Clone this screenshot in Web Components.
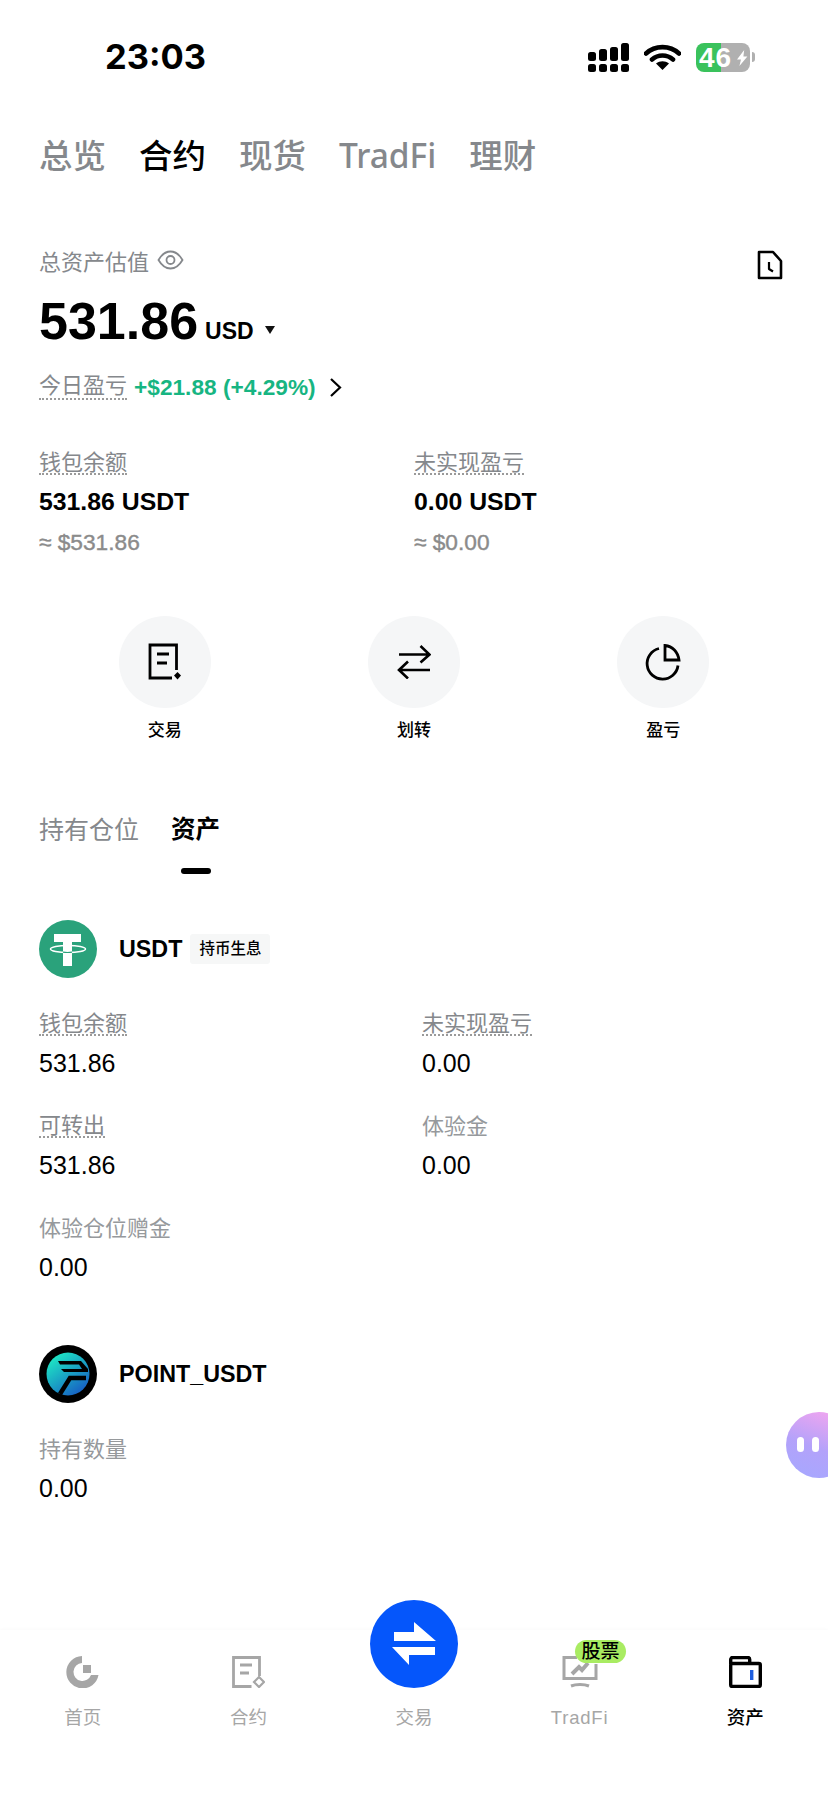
<!doctype html>
<html lang="zh">
<head>
<meta charset="utf-8">
<title>资产</title>
<style>
  html, body { margin: 0; padding: 0; background: #fff; }
  body {
    font-family: "Liberation Sans", "Noto Sans CJK SC", sans-serif;
    color: #000;
    width: 828px;
    height: 1795px;
    overflow: hidden;
  }
</style>
</head>
<body>
<app-screen>
  <status-bar time="23:03"></status-bar>
  <top-tabs items="总览,合约,现货,TradFi,理财" active="1"></top-tabs>
  <asset-summary></asset-summary>
  <action-row></action-row>
  <sub-tabs></sub-tabs>

  <coin-card name="USDT" badge="持币生息" style="margin-top:46px">
    <svg slot="logo" viewBox="0 0 58 58" width="58" height="58">
      <circle cx="29" cy="29" r="29" fill="#2aa27b"/>
      <path d="M15 14h27v8H33v24h-9V22h-9z" fill="#fff"/>
      <ellipse cx="29" cy="29" rx="17.5" ry="3.6" fill="none" stroke="#fff" stroke-width="1.5"/>
      <path d="M24 32.200q4.500 .6 9 0" fill="none" stroke="#2aa27b" stroke-width="1.200"/>
    </svg>
    <metric-item label="钱包余额" value="531.86" dotted></metric-item>
    <metric-item label="未实现盈亏" value="0.00" dotted></metric-item>
    <metric-item label="可转出" value="531.86" dotted></metric-item>
    <metric-item label="体验金" value="0.00"></metric-item>
    <metric-item label="体验仓位赠金" value="0.00"></metric-item>
  </coin-card>

  <coin-card name="POINT_USDT" style="margin-top:58px">
    <svg slot="logo" viewBox="0 0 58 58" width="58" height="58">
      <defs>
        <linearGradient id="pg" x1="0.2" y1="0.1" x2="0.8" y2="0.9">
          <stop offset="0" stop-color="#1de3c4"/>
          <stop offset="1" stop-color="#1763c4"/>
        </linearGradient>
      </defs>
      <circle cx="29" cy="29" r="29" fill="#000"/>
      <circle cx="29" cy="29" r="21.5" fill="url(#pg)"/>
      <path d="M19 16h23l7 8v3H25l-3-3h21l-3-4.500H21z" fill="#000"/>
      <path d="M47 33H31L21 49" fill="none" stroke="#000" stroke-width="4.500"/>
    </svg>
    <metric-item label="持有数量" value="0.00"></metric-item>
  </coin-card>

  <tab-bar></tab-bar>
  <float-bot></float-bot>
</app-screen>

<script>
const FONT = '"Liberation Sans", "Noto Sans CJK SC", sans-serif';
const GREY = '#85888c';

class AppScreen extends HTMLElement {
    constructor() {
        super();
        this.attachShadow({mode: 'open'}).innerHTML = `
            <style>
            :host {
                display: flex;
                flex-direction: column;
                position: relative;
                width: 828px;
                height: 1795px;
                overflow: hidden;
                background: #fff;
            }
            </style>
            <slot></slot>
        `;
    }
}

class StatusBar extends HTMLElement {
    constructor() {
        super();
        const time = this.getAttribute('time');
        this.attachShadow({mode: 'open'}).innerHTML = `
            <style>
            :host {
                display: flex;
                align-items: center;
                height: 114px;
                box-sizing: border-box;
                padding: 0 73px 0 105px;
            }
            .time {
                font: 700 34.500px/34px Inter, ${FONT};
                flex: 1;
            }
            .icons { display: flex; align-items: center; gap: 14px; }
            .batt {
                position: relative;
                width: 54px;
                height: 29px;
                border-radius: 8px;
                overflow: hidden;
                background: linear-gradient(90deg, #3ac25c 0 25px, #b0b0b0 25px);
                color: #fff;
                font: 700 28px/29px ${FONT};
                letter-spacing: 1px;
                padding-left: 3px;
                box-sizing: border-box;
                margin-left: 1px;
            }
            .batt svg { position: absolute; right: 1px; top: 5px; }
            .nub { width: 3px; height: 10px; background: #b0b0b0; border-radius: 0 3px 3px 0; margin-left: -12px; }
            </style>
            <div class="time">${time}</div>
            <div class="icons">
                <svg width="42" height="29" viewBox="0 0 42 29">
                    <g fill="#000">
                        <rect x="0" y="21" width="8" height="8" rx="2.500"/><rect x="11" y="21" width="8" height="8" rx="2.500"/>
                        <rect x="22" y="21" width="8" height="8" rx="2.500"/><rect x="33" y="21" width="8" height="8" rx="2.500"/>
                        <rect x="0" y="9" width="8" height="9" rx="2.500"/><rect x="11" y="6" width="8" height="12" rx="2.500"/>
                        <rect x="22" y="4" width="8" height="14" rx="2.500"/><rect x="33" y="0" width="8" height="18" rx="2.500"/>
                    </g>
                </svg>
                <svg width="37" height="26" viewBox="0 0 37 26">
                    <path d="M2 9.500C11 1 26 1 35 9.500M8 15.500C14 10.200 23 10.200 29 15.500" fill="none" stroke="#000" stroke-width="4.600" stroke-linecap="round"/>
                    <path d="M12 19.500c4-3 9-3 13 0L18.500 26z" fill="#000"/>
                </svg>
                <div class="batt">46
                    <svg width="12" height="20" viewBox="0 0 15 20"><path d="M9 0L0 12h5l-2 8 10-12H8z" fill="#fff"/></svg>
                </div>
                <div class="nub"></div>
            </div>
        `;
    }
}

class TopTabs extends HTMLElement {
    constructor() {
        super();
        const active = +this.getAttribute('active');
        const items = this.getAttribute('items').split(',')
            .map((t, i) => `<span class="${i === active ? 'on' : ''}">${t}</span>`).join('');
        this.attachShadow({mode: 'open'}).innerHTML = `
            <style>
            :host {
                display: flex;
                gap: 33px;
                padding: 21px 0 0 39px;
                height: 40px;
                font: 500 33.500px/40px "Noto Sans", ${FONT};
                color: ${GREY};
            }
            .on { color: #000; }
            </style>
            ${items}
        `;
    }
}

class DottedLabel extends HTMLElement {
    constructor() {
        super();
        this.attachShadow({mode: 'open'}).innerHTML = `
            <style>
            :host {
                display: inline-block;
                height: 24px;
                line-height: 27px;
                font-size: 22px;
                color: ${GREY};
                border-bottom: 2px dotted #9a9a9a;
            }
            </style>
            <slot></slot>
        `;
    }
}

class StatBlock extends HTMLElement {
    constructor() {
        super();
        this.attachShadow({mode: 'open'}).innerHTML = `
            <style>
            :host { display: block; }
            .l, .v, .a { height: 40px; display: flex; align-items: center; }
            .v { font: 700 24.800px/40px ${FONT}; color: #000; }
            .a { font: 400 22.700px/40px ${FONT}; color: #8b8b8b; -webkit-text-stroke: 0.4px #8b8b8b; }
            </style>
            <div class="l"><dotted-label>${this.getAttribute('label')}</dotted-label></div>
            <div class="v">${this.getAttribute('value')}</div>
            <div class="a">${this.getAttribute('approx')}</div>
        `;
    }
}

class AssetSummary extends HTMLElement {
    constructor() {
        super();
        this.attachShadow({mode: 'open'}).innerHTML = `
            <style>
            :host { display: block; padding: 70px 45px 0 39px; }
            .head {
                display: flex;
                align-items: center;
                height: 30px;
                font-size: 22px;
                color: ${GREY};
            }
            .head .eye { margin-left: 8px; margin-top: 0; }
            .head .doc { margin-left: auto; margin-top: 10px; }
            .big {
                display: flex;
                align-items: baseline;
                height: 60px;
                line-height: 60px;
                margin-top: 16px;
                font-weight: 700;
            }
            .big b { font-size: 52px; }
            .big i { font-style: normal; font-size: 23px; margin-left: 7px; }
            .big svg { margin-left: 11px; align-self: center; margin-top: 18px; }
            .pnl {
                display: flex;
                align-items: center;
                height: 30px;
                margin-top: 21px;
            }
            .pnl dotted-label { line-height: 24px; }
            .pnl .g {
                font: 700 22.700px/30px ${FONT};
                color: #17b582;
                margin-left: 7px;
            }
            .pnl svg { margin-left: 13px; }
            .stats {
                display: grid;
                grid-template-columns: 375px 1fr;
                margin-top: 40px;
            }
            </style>
            <div class="head">
                <span>总资产估值</span>
                <svg class="eye" width="27" height="20" viewBox="0 0 27 20" fill="none" stroke="#85888c" stroke-width="1.800">
                    <path d="M1.500 10C5 4 9 1.500 13.500 1.500S22 4 25.500 10C22 16 18 18.500 13.500 18.500S5 16 1.500 10z"/>
                    <circle cx="13.500" cy="10" r="4"/>
                </svg>
                <svg class="doc" width="26" height="30" viewBox="0 0 26 30" fill="none" stroke="#000" stroke-width="2.600" stroke-linejoin="round">
                    <path d="M2 2h14l8 9v17H2z"/>
                    <path d="M12 12v7l4 2.500" stroke-width="2.200"/>
                </svg>
            </div>
            <div class="big">
                <b>531.86</b><i>USD</i>
                <svg width="10" height="8" viewBox="0 0 10 8"><path d="M0 0h10L5 8z" fill="#111"/></svg>
            </div>
            <div class="pnl">
                <dotted-label>今日盈亏</dotted-label>
                <span class="g">+$21.88 (+4.29%)</span>
                <svg width="13" height="19" viewBox="0 0 13 19" fill="none" stroke="#000" stroke-width="2.200"><path d="M2 1l9 8.500-9 8.500"/></svg>
            </div>
            <div class="stats">
                <stat-block label="钱包余额" value="531.86 USDT" approx="≈ $531.86"></stat-block>
                <stat-block label="未实现盈亏" value="0.00 USDT" approx="≈ $0.00"></stat-block>
            </div>
        `;
    }
}

class ActionButton extends HTMLElement {
    constructor() {
        super();
        this.attachShadow({mode: 'open'}).innerHTML = `
            <style>
            :host {
                display: flex;
                flex-direction: column;
                align-items: center;
                gap: 11px;
            }
            .c {
                width: 92px;
                height: 92px;
                border-radius: 50%;
                background: #f5f6f7;
                display: flex;
                align-items: center;
                justify-content: center;
            }
            .t { font-size: 17px; line-height: 24px; font-weight: 500; color: #000; }
            </style>
            <div class="c"><slot></slot></div>
            <div class="t">${this.getAttribute('label')}</div>
        `;
    }
}

class ActionRow extends HTMLElement {
    constructor() {
        super();
        this.attachShadow({mode: 'open'}).innerHTML = `
            <style>
            :host {
                display: grid;
                grid-template-columns: repeat(3, 1fr);
                padding: 0 40px;
                margin-top: 54px;
            }
            </style>
            <action-button label="交易">
                <svg width="34" height="38" viewBox="0 0 34 38" fill="none" stroke="#000" stroke-width="2.800">
                    <path d="M28.500 27V2H2v33h22"/>
                    <path d="M9 11h12M9 20h10"/>
                    <path d="M29.500 29l3.500 3.500-3.500 4-3.500-4z" fill="#000" stroke="none"/>
                </svg>
            </action-button>
            <action-button label="划转">
                <svg width="34" height="34" viewBox="0 0 34 34" fill="none" stroke="#000" stroke-width="2.600">
                    <path d="M2 9.500h30M23.500 1l9 8.500-9 8"/>
                    <path d="M33 25H2M11 16.500l-9 8.500 9 8.500" />
                </svg>
            </action-button>
            <action-button label="盈亏">
                <svg width="36" height="37" viewBox="0 0 36 37" fill="none" stroke="#000" stroke-width="2.800">
                    <path d="M14 4.500A15.500 15.500 0 1 0 33 21.500"/>
                    <path d="M20 1.500c7.500 .5 13 6.500 14 14.500H20z"/>
                </svg>
            </action-button>
        `;
    }
}

class SubTabs extends HTMLElement {
    constructor() {
        super();
        this.attachShadow({mode: 'open'}).innerHTML = `
            <style>
            :host {
                display: flex;
                gap: 32px;
                padding-left: 39px;
                margin-top: 69px;
                font-size: 25px;
                line-height: 36px;
                color: ${GREY};
            }
            .t { display: flex; flex-direction: column; }
            .on { color: #000; font-weight: 700; align-items: center; font-size: 24.500px; }
            .bar { width: 30px; height: 6px; border-radius: 3px; background: #000; margin-top: 20px; }
            </style>
            <div class="t">持有仓位</div>
            <div class="t on">资产<div class="bar"></div></div>
        `;
    }
}

class CoinCard extends HTMLElement {
    constructor() {
        super();
        const badge = this.getAttribute('badge');
        this.attachShadow({mode: 'open'}).innerHTML = `
            <style>
            :host { display: block; padding: 0 39px; }
            .head { display: flex; align-items: center; height: 58px; }
            .head b { font-size: 23.300px; margin-left: 22px; }
            .badge {
                margin-left: 8px;
                height: 30px;
                line-height: 30px;
                padding: 0 9px;
                font-size: 15.500px;
                font-weight: 500;
                background: #f6f7f7;
                border-radius: 3px;
            }
            .grid {
                display: grid;
                grid-template-columns: 383px 1fr;
                row-gap: 22px;
                margin-top: 25px;
            }
            ::slotted(svg) { display: block; }
            </style>
            <div class="head">
                <slot name="logo"></slot>
                <b>${this.getAttribute('name')}</b>
                ${badge ? `<span class="badge">${badge}</span>` : ''}
            </div>
            <div class="grid"><slot></slot></div>
        `;
    }
}

class MetricItem extends HTMLElement {
    constructor() {
        super();
        const label = this.getAttribute('label');
        const dotted = this.hasAttribute('dotted');
        this.attachShadow({mode: 'open'}).innerHTML = `
            <style>
            :host { display: block; }
            .l, .v { height: 40px; display: flex; align-items: center; }
            .l { font-size: 22px; color: #96999c; }
            .l.plain { box-sizing: border-box; padding-bottom: 3px; }
            .v { font-size: 25px; color: #000; }
            </style>
            <div class="l ${dotted ? '' : 'plain'}">${dotted ? `<dotted-label>${label}</dotted-label>` : label}</div>
            <div class="v">${this.getAttribute('value')}</div>
        `;
    }
}

class TabItem extends HTMLElement {
    constructor() {
        super();
        this.attachShadow({mode: 'open'}).innerHTML = `
            <style>
            :host {
                display: flex;
                flex-direction: column;
                align-items: center;
                position: relative;
                color: #a6a6a6;
            }
            :host([active]) { color: #000; font-weight: 500; }
            :host([label="TradFi"]) .t { letter-spacing: .8px; }
            .i { height: 32px; margin-top: 26px; display: flex; align-items: flex-start; justify-content: center; }
            .t { font-size: 18.500px; line-height: 24px; margin-top: 18px; }
            </style>
            <div class="i"><slot></slot></div>
            <div class="t">${this.getAttribute('label')}</div>
        `;
    }
}

class TabBar extends HTMLElement {
    constructor() {
        super();
        this.attachShadow({mode: 'open'}).innerHTML = `
            <style>
            :host {
                display: grid;
                grid-template-columns: repeat(5, 1fr);
                position: absolute;
                left: 0;
                right: 0;
                bottom: 0;
                height: 165px;
                background: #fff;
                box-shadow: 0 -1px 3px rgba(0,0,0,0.025);
            }
            .fab {
                position: absolute;
                left: 370px;
                top: -30px;
                width: 88px;
                height: 88px;
                border-radius: 50%;
                background: #0556fb;
                display: flex;
                align-items: center;
                justify-content: center;
            }
            .pill {
                position: absolute;
                left: 575px;
                top: 10px;
                width: 51px;
                height: 23px;
                border-radius: 12px;
                background: #a9ec62;
                color: #000;
                font-size: 19px;
                line-height: 23px;
                text-align: center;
                font-weight: 500;
            }
            </style>
            <tab-item label="首页">
                <svg width="33" height="32" viewBox="0 0 33 32">
                    <path d="M16 0v7A9 9 0 1 0 25 19h7.500A16.200 16.200 0 1 1 16 0z" fill="#a6a6a6"/>
                    <rect x="17" y="9" width="8" height="8" fill="#a6a6a6"/>
                </svg>
            </tab-item>
            <tab-item label="合约">
                <svg width="33" height="32" viewBox="0 0 33 32" fill="none" stroke="#a6a6a6" stroke-width="2.800">
                    <path d="M27.500 20V1.500h-26v29h18"/>
                    <path d="M8 9h12M8 17h9"/>
                    <path d="M27 21l5 5-5 5-5-5z" stroke-width="2.200"/>
                </svg>
            </tab-item>
            <tab-item label="交易"></tab-item>
            <tab-item label="TradFi">
                <svg width="36" height="32" viewBox="0 0 36 32" fill="none" stroke="#a6a6a6" stroke-width="3">
                    <path d="M15 1.500H2v21h32V8"/>
                    <path d="M10 18l7-7 3 3 6-7" stroke-width="4"/>
                    <path d="M9 30c5-2 13-2 18 0"/>
                </svg>
            </tab-item>
            <tab-item label="资产" active>
                <svg width="33" height="32" viewBox="0 0 33 32" fill="none" stroke="#000" stroke-width="3.400">
                    <path d="M1.700 8V3.500a2 2 0 0 1 2-2h15a2 2 0 0 1 2 2V8"/>
                    <rect x="1.700" y="7.500" width="29.600" height="23" rx="1.500"/>
                    <rect x="21" y="14" width="3.400" height="10" fill="#1f5fe0" stroke="none"/>
                </svg>
            </tab-item>
            <div class="fab">
                <svg width="44" height="44" viewBox="0 0 44 44" fill="#fff">
                    <path d="M22 0L44 19H2V10H22z"/>
                    <path d="M17 43L0 25H43V33H17z"/>
                </svg>
            </div>
            <div class="pill">股票</div>
        `;
    }
}

class FloatBot extends HTMLElement {
    constructor() {
        super();
        this.attachShadow({mode: 'open'}).innerHTML = `
            <style>
            :host {
                position: absolute;
                left: 786px;
                top: 1412px;
                width: 66px;
                height: 66px;
                border-radius: 50%;
                background: linear-gradient(200deg, #fba6ee 0%, #b3a2fa 55%, #a5a8ff 100%);
            }
            i {
                position: absolute;
                top: 25px;
                width: 7px;
                height: 15px;
                border-radius: 4px;
                background: #fff;
            }
            </style>
            <i style="left:11px"></i><i style="left:26px"></i>
        `;
    }
}

customElements.define('app-screen', AppScreen);
customElements.define('status-bar', StatusBar);
customElements.define('top-tabs', TopTabs);
customElements.define('dotted-label', DottedLabel);
customElements.define('stat-block', StatBlock);
customElements.define('asset-summary', AssetSummary);
customElements.define('action-button', ActionButton);
customElements.define('action-row', ActionRow);
customElements.define('sub-tabs', SubTabs);
customElements.define('coin-card', CoinCard);
customElements.define('metric-item', MetricItem);
customElements.define('tab-item', TabItem);
customElements.define('tab-bar', TabBar);
customElements.define('float-bot', FloatBot);
</script>
</body>
</html>
